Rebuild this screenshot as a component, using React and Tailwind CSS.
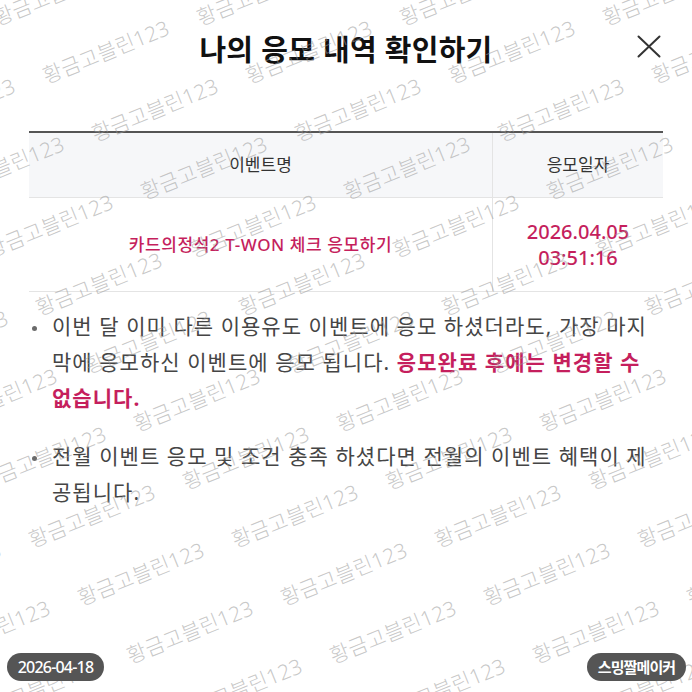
import React from 'react';

const FONT = "font-['Noto_Sans','Noto_Sans_CJK_KR',sans-serif]";

// watermark lattice: step (203, 0) across, (49, 58) down
const marks = [];
for (let k = -2; k <= 12; k++) {
  const cy = 52 + 58 * k;
  let cx = (((106 + 49 * k) % 203) + 203) % 203 - 203;
  for (; cx < 800; cx += 203) marks.push({ x: cx, y: cy });
}

const Watermark = () => (
  <div className="pointer-events-none absolute inset-0 overflow-hidden">
    {marks.map((m, i) => (
      <span
        key={i}
        className="absolute -translate-x-1/2 -translate-y-1/2 -rotate-[22deg] whitespace-nowrap text-[21px] font-light leading-none tracking-[0.01em] text-[#9a9a9a]/55"
        style={{ left: m.x, top: m.y }}
      >
        황금고블린123
      </span>
    ))}
  </div>
);

const CloseIcon = () => (
  <svg width="24" height="23" viewBox="0 0 24 23" fill="none" stroke="#333" strokeWidth="2" strokeLinecap="round">
    <path d="M1.5 1.5 L22.5 21.5 M22.5 1.5 L1.5 21.5" />
  </svg>
);

const Bullet = ({ children, className = '' }) => (
  <li className={`flex ${className}`}>
    <span className="flex h-[36px] w-[23px] shrink-0 items-center pt-[4px]">
      <span className="ml-[3px] h-[5px] w-[5px] rounded-full bg-[#6b6b6b]" />
    </span>
    <p className="text-[21px] leading-[36px] tracking-[0.05em] text-[#454545]">{children}</p>
  </li>
);

export default function App() {
  return (
    <div className={`relative h-[692px] w-full overflow-hidden bg-white ${FONT}`}>
      <div className="grid grid-cols-[1fr_auto_1fr] items-start px-[31px] pt-[30px]">
        <div />
        <h1 className="text-[29px] font-bold leading-[40px] tracking-[0.01em] text-[#111]">나의 응모 내역 확인하기</h1>
        <button className="mt-[5px] justify-self-end">
          <CloseIcon />
        </button>
      </div>

      <div className="mx-[29px] mt-[61px] border-t-2 border-[#555]">
        <div className="grid h-[65px] grid-cols-[463px_1fr] border-b border-[#e4e4e4] bg-[#f6f7f9] text-[17px] text-[#333]">
          <div className="flex items-center justify-center">이벤트명</div>
          <div className="flex items-center justify-center border-l border-[#e4e4e4]">응모일자</div>
        </div>
        <div className="grid h-[94px] grid-cols-[463px_1fr] border-b border-[#e4e4e4]">
          <div className="flex items-center justify-center text-[17px] font-medium tracking-[0.035em] text-[#c51f5d]">
            카드의정석2 T-WON 체크 응모하기
          </div>
          <div className="flex flex-col items-center justify-center border-l border-[#e4e4e4] text-[20px] font-medium leading-[26px] text-[#c51f5d]">
            <span>2026.04.05</span>
            <span>03:51:16</span>
          </div>
        </div>
      </div>

      <ul className="ml-[29px] mr-[30px] mt-[16px]">
        <Bullet>
          이번 달 이미 다른 이용유도 이벤트에 응모 하셨더라도, 가장 마지막에 응모하신 이벤트에 응모 됩니다.{' '}
          <b className="font-bold text-[#c51f5d]">응모완료 후에는 변경할 수 없습니다.</b>
        </Bullet>
        <Bullet className="mt-[22px]">
          전월 이벤트 응모 및 조건 충족 하셨다면 전월의 이벤트 혜택이 제공됩니다.
        </Bullet>
      </ul>

      <Watermark />

      <div className="absolute left-[7px] top-[653px] flex h-[28px] w-[97px] items-center justify-center rounded-full bg-[#555] text-[16px] font-medium tracking-[-0.05em] text-white">
        2026-04-18
      </div>
      <div className="absolute right-[6px] top-[653px] flex h-[28px] w-[99px] items-center justify-center rounded-full bg-[#555] text-[15px] font-bold tracking-[-0.06em] text-white">
        스밍짤메이커
      </div>
    </div>
  );
}
